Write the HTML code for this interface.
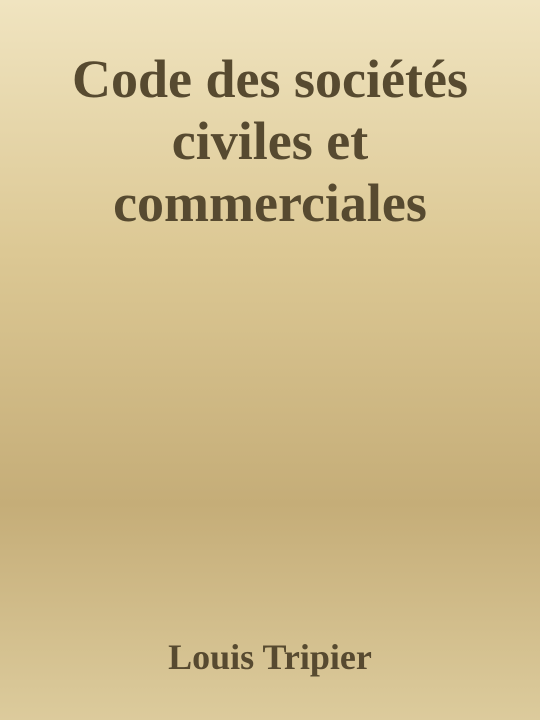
<!DOCTYPE html>
<html><head><style>
html,body{margin:0;padding:0}
body{width:540px;height:720px;overflow:hidden;background:linear-gradient(to bottom,#f0e4c0 0%,#dcc894 35%,#c5ad78 70%,#dccb9c 100%);font-family:"Liberation Serif",serif;font-weight:bold;color:#574a30;position:relative}
h1{margin:0;position:absolute;top:48px;left:0;width:540px;text-align:center;font-size:54px;line-height:62px;font-weight:bold}
.a{position:absolute;top:635px;left:0;width:540px;text-align:center;font-size:36px;line-height:44px}
</style></head><body>
<h1>Code des sociétés<br>civiles et<br>commerciales</h1>
<div class="a">Louis Tripier</div>
</body></html>
